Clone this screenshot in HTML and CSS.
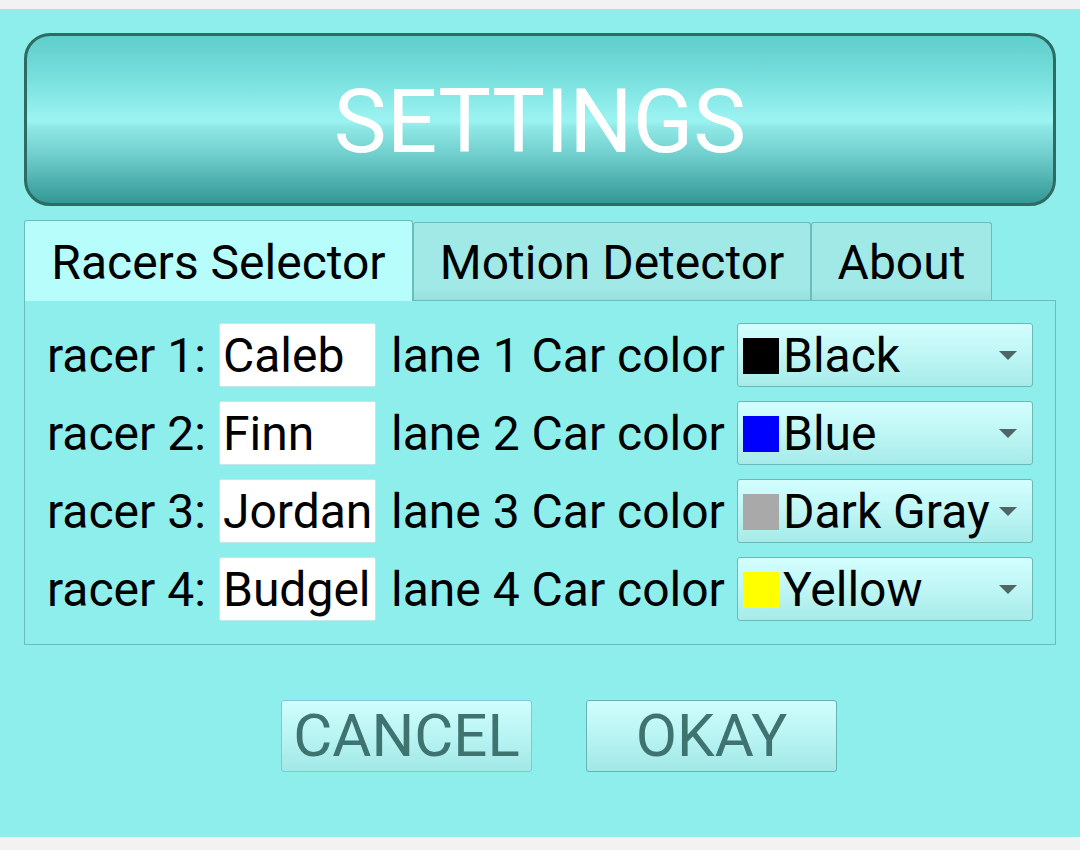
FILE: index.html
```html
<!DOCTYPE html>
<html>
<head>
<meta charset="utf-8">
<link rel="stylesheet" href="styles.css">
</head>
<body>
<div class="dialog">
  <div class="header"><span class="title">SETTINGS</span></div>
  <div class="tabs">
    <div class="tab tab-active tab-w1">Racers Selector</div>
    <div class="tab tab-w2">Motion Detector</div>
    <div class="tab tab-w3">About</div>
  </div>
  <div class="panel">
    <div class="row">
      <span class="lbl">racer 1:</span>
      <span class="input">Caleb</span>
      <span class="lbl lane">lane 1 Car color</span>
      <span class="select"><span class="swatch sw-black"></span><span class="opt">Black</span><span class="arrow"></span></span>
    </div>
    <div class="row">
      <span class="lbl">racer 2:</span>
      <span class="input">Finn</span>
      <span class="lbl lane">lane 2 Car color</span>
      <span class="select"><span class="swatch sw-blue"></span><span class="opt">Blue</span><span class="arrow"></span></span>
    </div>
    <div class="row">
      <span class="lbl">racer 3:</span>
      <span class="input">Jordan</span>
      <span class="lbl lane">lane 3 Car color</span>
      <span class="select"><span class="swatch sw-gray"></span><span class="opt">Dark Gray</span><span class="arrow"></span></span>
    </div>
    <div class="row">
      <span class="lbl">racer 4:</span>
      <span class="input">Budgel</span>
      <span class="lbl lane">lane 4 Car color</span>
      <span class="select"><span class="swatch sw-yellow"></span><span class="opt">Yellow</span><span class="arrow"></span></span>
    </div>
  </div>
  <div class="buttons">
    <div class="btn btn-cancel">CANCEL</div>
    <div class="btn">OKAY</div>
  </div>
</div>
</body>
</html>
```

FILE: styles.css
```css
html, body {
  margin: 0;
  padding: 0;
  background: #f2f2f2;
}
body {
  font-family: Roboto, "Noto Sans", sans-serif;
  width: 1080px;
  height: 850px;
  overflow: hidden;
}
.dialog {
  margin-top: 9px;
  height: 828px;
  background: #8eeeeb;
  padding: 24px 24px 0 24px;
  box-sizing: border-box;
}
.header {
  height: 173px;
  box-sizing: border-box;
  border: 3px solid #2e6b62;
  border-radius: 26px;
  background: linear-gradient(to bottom, #5fcecc 0%, #78dfdd 25%, #9cf4f2 51%, #8ee7e5 55%, #6fcdcb 72%, #339896 100%);
  display: flex;
  align-items: center;
  justify-content: center;
}
.title {
  color: #ffffff;
  font-size: 89px;
  line-height: 1;
  margin-top: 4px;
}
.tabs {
  display: flex;
  align-items: flex-end;
  margin-top: 14px;
  height: 80px;
}
.tab {
  box-sizing: border-box;
  height: 78px;
  background: linear-gradient(to bottom, #a1e9e7 0%, #a1e9e7 85%, #98e0de 100%);
  border: 1px solid #6cbcbb;
  border-bottom: none;
  border-radius: 3px 3px 0 0;
  font-size: 48px;
  color: #000;
  display: flex;
  align-items: center;
  justify-content: center;
  padding-top: 1px;
}
.tab-active {
  height: 81px;
  margin-bottom: -1px;
  background: #b6fdfc;
  position: relative;
  z-index: 1;
  padding-top: 2px;
}
.tab-w1 { width: 389px; }
.tab-w2 { width: 398px; }
.tab-w3 { width: 181px; }
.panel {
  box-sizing: border-box;
  height: 345px;
  border: 1px solid #6cbcbb;
  padding: 21px 0 0 22px;
  display: flex;
  flex-direction: column;
  gap: 14px;
}
.row {
  display: grid;
  grid-template-columns: 172px 157px 361px 296px;
  height: 64px;
  align-items: center;
}
.lbl {
  font-size: 48px;
  line-height: 64px;
  color: #000;
  white-space: nowrap;
  padding-top: 2px;
}
.lane {
  padding-left: 15px;
}
.input {
  height: 64px;
  box-sizing: border-box;
  background: #ffffff;
  border: 1px solid #c8e6e5;
  border-radius: 2px;
  font-size: 48px;
  line-height: 64px;
  padding-left: 3px;
  overflow: hidden;
  white-space: nowrap;
}
.select {
  height: 64px;
  box-sizing: border-box;
  border: 1px solid #6cb8b7;
  border-radius: 3px;
  background: linear-gradient(to bottom, #d3fefe 0%, #bff6f5 50%, #a6ebe9 100%);
  display: flex;
  align-items: center;
  padding-left: 5px;
  position: relative;
}
.swatch {
  width: 36px;
  height: 36px;
  flex: none;
  margin-top: 2px;
}
.sw-black { background: #000000; }
.sw-blue { background: #0000ff; }
.sw-gray { background: #a9a9a9; }
.sw-yellow { background: #ffff00; }
.opt {
  font-size: 48px;
  line-height: 64px;
  padding-left: 4px;
  padding-top: 2px;
  white-space: nowrap;
}
.arrow {
  position: absolute;
  right: 15px;
  top: 27px;
  width: 0;
  height: 0;
  border-left: 9px solid transparent;
  border-right: 9px solid transparent;
  border-top: 9px solid #4d6766;
}
.buttons {
  display: flex;
  gap: 54px;
  padding-left: 257px;
  margin-top: 55px;
}
.btn {
  width: 251px;
  height: 72px;
  box-sizing: border-box;
  border: 1px solid #64b4b2;
  border-radius: 3px;
  background: linear-gradient(to bottom, #d0fefe 0%, #b9f4f3 50%, #a2e8e6 100%);
  color: #3e7370;
  font-size: 60px;
  line-height: 70px;
  text-align: center;
}
.btn-cancel {
  border-color: #7cc8dc;
}
```
